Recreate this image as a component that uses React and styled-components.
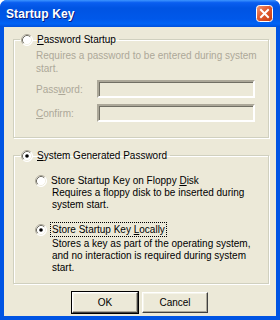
import React from "react";
import styled, { createGlobalStyle } from "styled-components";

const GlobalStyle = createGlobalStyle`
  html, body {
    margin: 0;
    padding: 0;
    background: #ffffff;
  }
  body {
    font-family: "Liberation Sans", Arial, sans-serif;
    font-size: 10px;
  }
`;

const Window = styled.div`
  width: 280px;
  height: 320px;
  box-sizing: border-box;
  display: flex;
  flex-direction: column;
  border-radius: 7px 7px 0 0;
  overflow: hidden;
  background: #0054e3;
`;

const TitleBar = styled.div`
  height: 27px;
  flex: none;
  display: flex;
  align-items: center;
  justify-content: space-between;
  padding: 0 7px 0 6px;
  background: linear-gradient(
    #3d95ff 0%,
    #0a5ef0 10%,
    #0054e3 30%,
    #0058ea 70%,
    #0063f5 88%,
    #0050dc 100%
  );
`;

const Title = styled.span`
  color: #ffffff;
  font-family: "Liberation Sans", Arial, sans-serif;
  font-weight: bold;
  font-size: 12px;
  text-shadow: 1px 1px 0 #0a1e80;
  letter-spacing: 0.1px;
`;

const Frame = styled.div`
  flex: 1;
  display: flex;
  flex-direction: column;
  margin: 0 4px 4px 4px;
  padding: 6px 7px 0 9px;
  background: #ece9d8;
`;

const Group = styled.fieldset`
  margin: 0 0 ${(p) => p.$gap || 0}px 0;
  padding: ${(p) => p.$pad};
  border: 1px solid #d0d0bf;
  border-radius: 0;
  box-shadow: inset 1px 1px 0 #ffffff, 1px 1px 0 #ffffff;
  min-width: 0;
`;

const Legend = styled.legend`
  padding: 0 3px 0 1px;
  margin-left: 6px;
  display: flex;
  align-items: center;
  height: 13px;
`;

const RadioRow = styled.div`
  display: flex;
  align-items: center;
  height: 13px;
  margin-left: ${(p) => p.$indent || 0}px;
`;

const Label = styled.span`
  margin-left: 4px;
  color: ${(p) => (p.$disabled ? "#aca899" : "#000000")};
  white-space: nowrap;
  line-height: 13px;
  ${(p) => p.$focus && "outline: 1px dotted #000; outline-offset: 0px; padding: 0 1px;"}
`;

const Desc = styled.div`
  color: ${(p) => (p.$disabled ? "#aca899" : "#000000")};
  line-height: ${(p) => p.$lh || 12}px;
  margin-left: ${(p) => p.$indent}px;
  margin-top: ${(p) => p.$top || 0}px;
`;

const Field = styled.div`
  display: flex;
  align-items: center;
  margin-left: 22px;
  margin-top: ${(p) => p.$top}px;
`;

const FieldLabel = styled.span`
  width: 61px;
  color: #aca899;
`;

const Input = styled.div`
  width: 154px;
  height: 14px;
  background: #ece9d8;
  border-top: 2px solid #aca899;
  border-left: 2px solid #aca899;
  border-bottom: 2px solid #ffffff;
  border-right: 2px solid #ffffff;
  box-shadow: inset 1px 1px 0 #716f64;
`;

const ButtonRow = styled.div`
  display: flex;
  justify-content: center;
  gap: 4px;
  margin-top: 8px;
  padding-right: 2px;
`;

const Button = styled.button`
  width: 66px;
  height: 21px;
  padding: 0;
  font-family: "Liberation Sans", Arial, sans-serif;
  font-size: 10px;
  color: #000;
  background: #ece9d8;
  border-top: 1px solid #ffffff;
  border-left: 1px solid #ffffff;
  border-right: 1px solid #404040;
  border-bottom: 1px solid #404040;
  box-shadow: inset -1px -1px 0 #aca899, inset 1px 1px 0 #f5f4ea;
  ${(p) => p.$default && "outline: 1px solid #000; outline-offset: 0;"}
`;

const U = styled.span`
  text-decoration: underline;
`;

const Radio = ({ checked }) => (
  <svg width="12" height="12" viewBox="0 0 12 12" style={{ flex: "none" }}>
    <circle cx="6" cy="6" r="5.5" fill="#ffffff" />
    <path d="M2.11 9.89 A5.5 5.5 0 0 1 9.89 2.11" stroke="#aca899" fill="none" />
    <path d="M2.82 9.18 A4.5 4.5 0 0 1 9.18 2.82" stroke="#716f64" fill="none" />
    <path d="M9.89 2.11 A5.5 5.5 0 0 1 2.11 9.89" stroke="#ffffff" fill="none" />
    <path d="M9.18 2.82 A4.5 4.5 0 0 1 2.82 9.18" stroke="#f1efe2" fill="none" />
    {checked && <circle cx="6" cy="6" r="1.8" fill="#000" />}
  </svg>
);

const CloseIcon = () => (
  <svg width="17" height="17" viewBox="0 0 17 17">
    <defs>
      <linearGradient id="cl" x1="0" y1="0" x2="1" y2="1">
        <stop offset="0" stopColor="#f29a7a" />
        <stop offset="0.45" stopColor="#e15a2e" />
        <stop offset="1" stopColor="#c43b12" />
      </linearGradient>
    </defs>
    <rect x="0.5" y="0.5" width="16" height="16" rx="3" fill="url(#cl)" stroke="#ffffff" />
    <path d="M5 5 L12 12 M12 5 L5 12" stroke="#ffffff" strokeWidth="2" strokeLinecap="square" />
  </svg>
);

export default function App() {
  return (
    <>
      <GlobalStyle />
      <Window>
        <TitleBar>
          <Title>Startup Key</Title>
          <CloseIcon />
        </TitleBar>
        <Frame>
          <Group $pad="3px 0 15px 0" $gap={11}>
            <Legend>
              <Radio />
              <Label>
                <U>P</U>assword Startup
              </Label>
            </Legend>
            <Desc $disabled $indent={22} $lh={13}>
              Requires a password to be entered during system
              <br />
              start.
            </Desc>
            <Field $top={5}>
              <FieldLabel>
                Pass<U>w</U>ord:
              </FieldLabel>
              <Input />
            </Field>
            <Field $top={6}>
              <FieldLabel>
                <U>C</U>onfirm:
              </FieldLabel>
              <Input />
            </Field>
          </Group>
          <Group $pad="12px 0 9px 0">
            <Legend>
              <Radio checked />
              <Label>
                <U>S</U>ystem Generated Password
              </Label>
            </Legend>
            <RadioRow $indent={21}>
              <Radio />
              <Label>
                Store Startup Key on Floppy <U>D</U>isk
              </Label>
            </RadioRow>
            <Desc $indent={38} $top={0}>
              Requires a floppy disk to be inserted during
              <br />
              system start.
            </Desc>
            <RadioRow $indent={21} style={{ marginTop: 12 }}>
              <Radio checked />
              <Label $focus>
                Store Startup Key <U>L</U>ocally
              </Label>
            </RadioRow>
            <Desc $indent={38} $top={2}>
              Stores a key as part of the operating system,
              <br />
              and no interaction is required during system
              <br />
              start.
            </Desc>
          </Group>
          <ButtonRow>
            <Button $default>OK</Button>
            <Button>Cancel</Button>
          </ButtonRow>
        </Frame>
      </Window>
    </>
  );
}
